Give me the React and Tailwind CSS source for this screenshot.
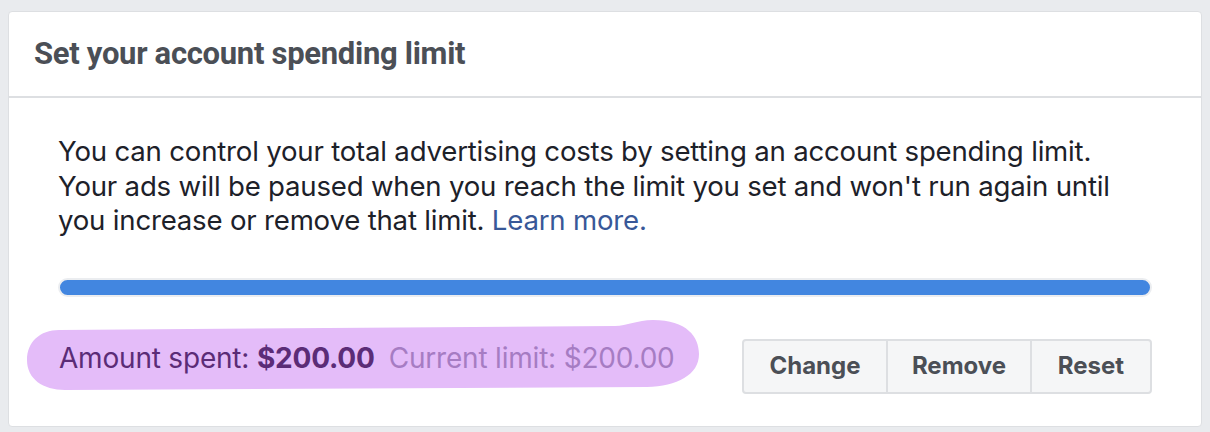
import React from 'react';

function Highlight() {
  // marker stroke drawn over the amounts
  return (
    <svg
      className="absolute left-[-34px] top-[-22px] pointer-events-none"
      width="680"
      height="74"
      viewBox="0 0 680 74"
    >
      <path
        d="M34 11 L590 7 C602 7 612 1 628 1 C662 1 674 18 674 35 C674 56 652 67 622 68 L40 71 C18 71 2 60 2 41 C2 23 15 11 34 11 Z"
        fill="#e4bcf9"
      />
    </svg>
  );
}

export default function App() {
  return (
    <div className="min-h-[432px] bg-[#e9ebee] px-[8px] pt-[11px] pb-[6px]" style={{ fontFamily: 'Inter, "Noto Sans", sans-serif' }}>
      <div className="bg-white border border-[#dddfe2] rounded-[4px] h-[416px] flex flex-col">
        {/* Header */}
        <div className="h-[86px] flex items-center px-[25px] border-b-2 border-[#dddfe2]">
          <h2 className="text-[31px] font-bold text-[#4b4f56] tracking-[-0.3px]" style={{ fontFamily: 'Roboto, "Liberation Sans", sans-serif' }}>
            Set your account spending limit
          </h2>
        </div>

        {/* Body */}
        <div className="px-[49px] pt-[36px] flex flex-col">
          <p className="text-[27.6px] leading-[34.5px] text-[#1d2129] tracking-[-0.2px] whitespace-nowrap">
            You can control your total advertising costs by setting an account spending limit.
            <br />
            Your ads will be paused when you reach the limit you set and won't run again until
            <br />
            you increase or remove that limit.{' '}
            <a href="#" className="text-[#385898]">Learn more.</a>
          </p>

          <div className="mt-[40px] h-[19px] rounded-full border-2 border-[#ebedf0] bg-[#4286e0]" />

          <div className="mt-[42px] flex items-center justify-between">
            <div className="relative ml-[1px] -mt-[16px]">
              <Highlight />
              <p className="relative text-[28px] leading-[34px] text-[#5b2c77] tracking-[-0.2px] whitespace-nowrap">
                Amount spent: <span className="font-bold">$200.00</span>
                <span className="ml-[14px] text-[#a67cc3]">Current limit: $200.00</span>
              </p>
            </div>
            <div className="flex h-[55px] border-2 border-[#dddfe2] rounded-[4px] bg-[#f5f6f7] text-[#4b4f56] text-[24px] font-bold">
              <button className="w-[142px] h-full">Change</button>
              <button className="w-[144px] h-full border-l-2 border-[#dddfe2]">Remove</button>
              <button className="w-[120px] h-full border-l-2 border-[#dddfe2]">Reset</button>
            </div>
          </div>
        </div>
      </div>
    </div>
  );
}
